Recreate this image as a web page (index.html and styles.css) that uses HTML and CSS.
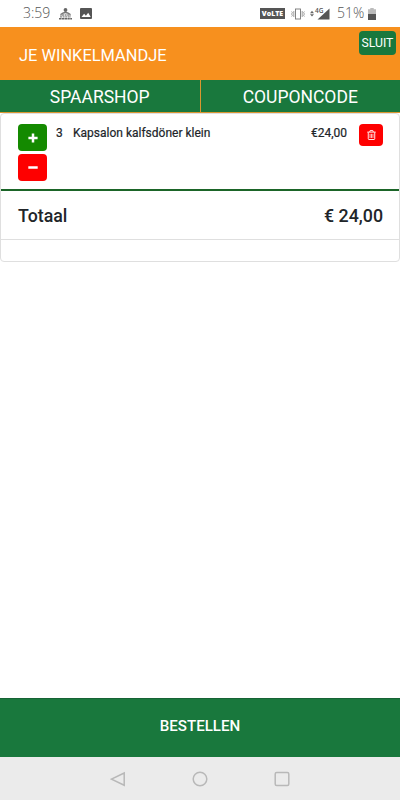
FILE: index.html
```html
<!DOCTYPE html>
<html lang="nl">
  <head>
    <meta charset="UTF-8" />
    <meta name="viewport" content="width=device-width, initial-scale=1.0" />
    <title>Je winkelmandje</title>
    <link rel="stylesheet" href="styles.css">
  </head>
  <body>
    <div class="status-bar">
      <span class="clock">3:59</span>
      <svg class="notify-icon" width="13" height="12" viewBox="0 0 13 12">
        <circle cx="6.5" cy="2" r="1.9" fill="#666" />
        <path d="M2 7.8V6.2Q6.5 2.8 11 6.2V7.8" fill="none" stroke="#777" stroke-width="1.3" />
        <path d="M3 7h7M1 8.8h11" stroke="#888" stroke-width="1.3" stroke-dasharray="2 .6" />
        <path d="M0 10.8h13" stroke="#666" stroke-width="1.6" stroke-dasharray="2.4 .4" />
      </svg>
      <svg class="photo-icon" width="12" height="11" viewBox="0 0 12 11">
        <rect width="12" height="11" rx="1" fill="#555" />
        <path d="M1.5 9l2.6-3.3 1.8 2L8.2 4.8 10.7 9z" fill="#fff" />
      </svg>
      <span class="volte">VoLTE</span>
      <svg class="vibrate-icon" width="14" height="12" viewBox="0 0 14 12" fill="none" stroke="#777">
        <rect x="4.5" y="1" width="5" height="10" stroke-width=".9" />
        <path d="M2.8 3v6M.6 3.5l.8 1.2-.8 1.3.8 1.3-.8 1.2M11.2 3v6M13.4 3.5l-.8 1.2.8 1.3-.8 1.3.8 1.2" stroke-width=".7" />
      </svg>
      <svg class="signal-icon" width="20" height="13" viewBox="0 0 20 13">
        <path d="M0 6.2l2-2.4 2 2.4zM0 7.2h4L2 9.6z" fill="#666" />
        <path d="M19.5 1.5v11h-12z" fill="#555" />
        <path d="M5 0h8.5v5.8H5z" fill="#fff" />
        <text x="5" y="5.6" class="network">4G</text>
      </svg>
      <span class="percent">51%</span>
      <svg class="battery-icon" width="8" height="12" viewBox="0 0 8 12">
        <path d="M2.3 0h3.4v1.3H8V6H0V1.3h2.3z" fill="#bbb" />
        <path d="M0 6h8v6H0z" fill="#555" />
      </svg>
    </div>

    <header class="cart-header">
      <h1>JE WINKELMANDJE</h1>
      <button type="button" class="close-button">SLUIT</button>
    </header>

    <nav class="tabs">
      <button type="button">SPAARSHOP</button>
      <button type="button">COUPONCODE</button>
    </nav>

    <main>
      <div class="cart">
        <div class="cart-item">
          <div class="quantity-buttons">
            <button type="button" class="plus" aria-label="Meer">
              <svg width="10" height="10" viewBox="0 0 10 10">
                <path d="M5 .4v9.2M.4 5h9.2" stroke="#fff" stroke-width="2.5" />
              </svg>
            </button>
            <button type="button" class="minus" aria-label="Minder">
              <svg width="10" height="10" viewBox="0 0 10 10">
                <path d="M.3 4.5h9.4" stroke="#fff" stroke-width="2.5" />
              </svg>
            </button>
          </div>
          <span class="amount">3</span>
          <span class="product">Kapsalon kalfsdöner klein</span>
          <span class="price">€24,00</span>
          <button type="button" class="delete" aria-label="Verwijder">
            <svg width="9" height="10" viewBox="0 0 10 11" fill="none" stroke="#fff" stroke-width="1">
              <path d="M.3 2.3h9.4M3 2.2L3.5.6h3L7 2.2M1.4 2.5v7.2q0 .8.8.8h5.6q.8 0 .8-.8V2.5" />
              <path d="M3.4 4.2v4.6M5 4.2v4.6M6.6 4.2v4.6" stroke-width=".8" />
            </svg>
          </button>
        </div>
        <div class="total">
          <span>Totaal</span>
          <span>€ 24,00</span>
        </div>
        <div class="cart-footer"></div>
      </div>
    </main>

    <button type="button" class="order-button">BESTELLEN</button>

    <div class="system-nav">
      <svg width="16" height="16" viewBox="0 0 16 16">
        <path d="M14.2 2v12.2L1.5 8.1z" />
      </svg>
      <svg width="16" height="16" viewBox="0 0 16 16">
        <circle cx="8" cy="8" r="6.8" />
      </svg>
      <svg width="16" height="16" viewBox="0 0 16 16">
        <rect x="1.2" y="1.5" width="13.6" height="13" rx="1.5" />
      </svg>
    </div>
  </body>
</html>
```
FILE: styles.css
```css
* {
  box-sizing: border-box;
}
body {
  font-family: Roboto, sans-serif;
  display: flex;
  flex-direction: column;
  height: 100vh;
  margin: 0;
  background-color: #fff;
  color: #212529;
}
button {
  font-family: inherit;
  border: none;
  padding: 0;
  color: #fff;
  cursor: pointer;
}
svg {
  display: block;
  flex: none;
}
.status-bar {
  height: 27px;
  flex: none;
  display: flex;
  align-items: center;
  padding: 0 24px 0 23px;
  font-family: "Open Sans", sans-serif;
  font-weight: 300;
  font-size: 14px;
  line-height: 26px;
  color: #555;
}
.clock {
  width: 36px;
}
.clock,
.percent {
  padding-bottom: 1px;
}
.photo-icon {
  margin-left: 8px;
}
.volte {
  width: 25px;
  height: 11px;
  margin-left: auto;
  background-color: #555;
  color: #fff;
  font-size: 7px;
  font-weight: 800;
  line-height: 11px;
  text-align: center;
}
.vibrate-icon {
  margin-left: 6px;
}
.signal-icon {
  margin-left: 5px;
}
.network {
  font-size: 6.5px;
  font-weight: 600;
  fill: #555;
}
.percent {
  margin-left: 7px;
  width: 31px;
}
.cart-header {
  height: 53px;
  flex: none;
  display: flex;
  justify-content: space-between;
  padding: 4px 4px 0 19px;
  background-color: #f7901e;
}
.cart-header h1 {
  margin: 15px 0 0;
  font-size: 16.4px;
  font-weight: 400;
  line-height: 20px;
  color: #fff;
}
.close-button {
  width: 37px;
  height: 24px;
  border-radius: 4px;
  background-color: #19783d;
  font-size: 12.2px;
}
.tabs {
  height: 33px;
  flex: none;
  display: flex;
  gap: 1px;
  padding-bottom: 1px;
  background-color: #d9962f;
}
.tabs button {
  flex: 1;
  padding-top: 2px;
  background-color: #19783d;
  font-size: 17.5px;
}
main {
  flex: 1;
}
.cart {
  border: 1px solid #dfdfdf;
  border-radius: 4px;
}
.cart-item {
  height: 77px;
  display: flex;
  align-items: flex-start;
  padding: 10px 16px 0 17px;
  border-bottom: 2px solid #1b6528;
  font-size: 12px;
  line-height: 18px;
  -webkit-text-stroke: 0.2px;
}
.quantity-buttons {
  display: flex;
  flex-direction: column;
  gap: 3px;
  margin-right: 9px;
}
.quantity-buttons button,
.delete {
  display: flex;
  align-items: center;
  justify-content: center;
  width: 29px;
  height: 27px;
  border-radius: 4px;
  background-color: #fe0000;
}
.quantity-buttons .plus {
  background-color: #148a00;
}
.amount {
  width: 17px;
}
.product {
  flex: 1;
}
.price {
  margin-right: 12px;
}
.delete {
  width: 24px;
  height: 22px;
}
.total {
  height: 49px;
  display: flex;
  align-items: center;
  justify-content: space-between;
  padding: 0 16px 0 17px;
  border-bottom: 1px solid #dfdfdf;
  font-size: 17.8px;
  font-weight: 500;
}
.cart-footer {
  height: 21px;
}
.order-button {
  height: 59px;
  flex: none;
  padding-bottom: 4px;
  border-top: 1px solid #176335;
  background-color: #19783d;
  font-size: 15.1px;
  font-weight: 500;
}
.system-nav {
  height: 43px;
  flex: none;
  display: flex;
  justify-content: space-between;
  align-items: center;
  padding: 0 110px;
  background-color: #ebebeb;
}
.system-nav svg {
  fill: none;
  stroke: #b8b8b8;
  stroke-width: 1.5;
}
```
